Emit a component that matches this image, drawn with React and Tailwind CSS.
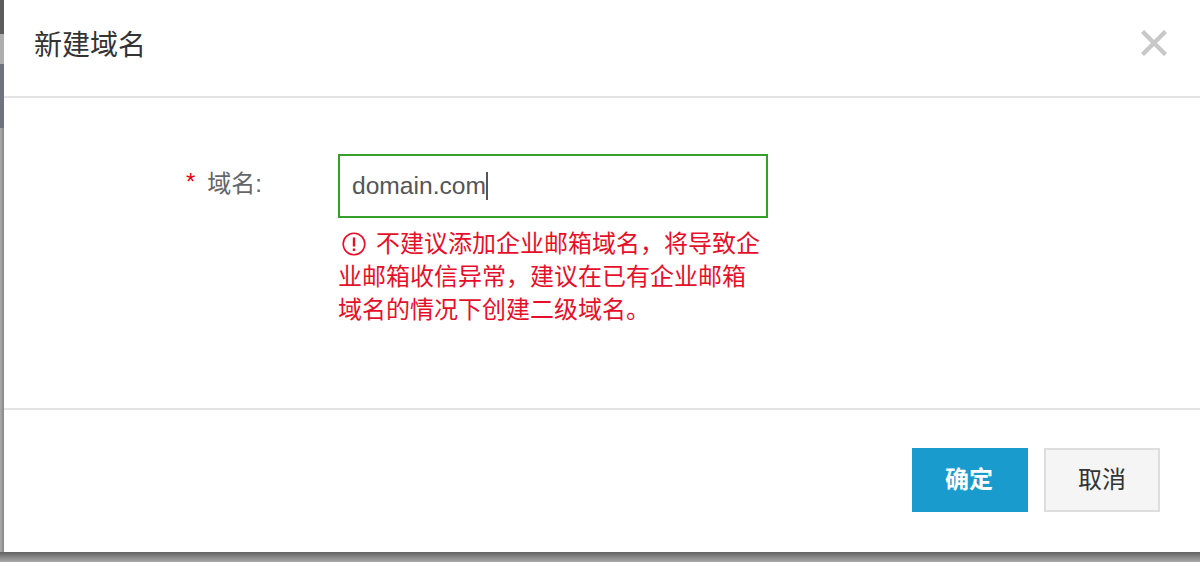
import React from "react";

const cjk = "font-['Liberation_Sans','Noto_Sans_CJK_SC',sans-serif]";

function App() {
  return (
    <div className={`flex h-[562px] w-[1200px] flex-col overflow-hidden bg-[#9a9a9a] ${cjk}`}>
      <div className="flex h-[552px]">
        {/* page behind the dialog */}
        <div className="flex w-[4px] flex-col bg-linear-to-r from-[#ababab] to-[#868686]">
          <div className="h-[34px] bg-[#5c5c5c]" />
          <div className="h-[30px] bg-[#adadad]" />
          <div className="h-[64px] bg-[#6f7380]" />
        </div>

        <div className="flex flex-1 flex-col bg-white">
          {/* Header */}
          <header className="flex h-[98px] items-start justify-between border-b-2 border-[#e3e3e3] pl-[30px] pr-[33px]">
            <h1 className="mt-[28px] text-[28px] leading-[36px] font-normal text-[#333]">新建域名</h1>
            <button className="mt-[30px] text-[#c8c8c8]" aria-label="关闭">
              <svg className="block" width="26" height="26" viewBox="0 0 26 26" fill="none" stroke="currentColor" strokeWidth="4.4">
                <path d="M1.5 1.5l23 23M24.5 1.5l-23 23" />
              </svg>
            </button>
          </header>

          {/* Form */}
          <main className="flex h-[310px] items-start pt-[56px]">
            <label className="flex w-[334px] justify-end pt-[15px] pr-[76px] text-[24px] leading-[30px] text-[#666]">
              <span className="mr-[12px] -translate-y-[2px] text-[#e60012]">*</span>
              域名:
            </label>
            <div className="w-[430px]">
              <div className="flex h-[64px] items-center border-2 border-[#37a02b] px-[12px] text-[24.6px] text-[#555]">
                domain.com
                <span className="h-[28px] w-[2px] bg-[#555]" />
              </div>
              <div className="mt-[9px] w-[430px] text-[24px] leading-[33px] text-[#e60f2a]">
                <svg className="mr-[10px] ml-[4px] inline-block -translate-y-[2px]" width="24" height="24" viewBox="0 0 24 24" fill="none" stroke="currentColor" strokeWidth="1.6">
                  <circle cx="12" cy="12" r="10.8" />
                  <path d="M12 5.5v9M12 16.5v2.4" strokeWidth="2.4" />
                </svg>
                不建议添加企业邮箱域名，将导致企业邮箱收信异常，建议在已有企业邮箱域名的情况下创建二级域名。
              </div>
            </div>
          </main>

          {/* Footer */}
          <footer className="flex flex-1 items-start justify-end gap-[16px] border-t-2 border-[#e3e3e3] pt-[38px] pr-[40px]">
            <button className="h-[64px] w-[116px] bg-[#1a9bcd] pr-[2px] text-[24px] font-bold text-white">确定</button>
            <button className="h-[64px] w-[116px] border-2 border-[#dedede] bg-[#f5f5f5] text-[24px] text-[#333]">取消</button>
          </footer>
        </div>
      </div>
      <div className="flex-1 bg-linear-to-b from-[#636363] to-[#aaaaaa]" />
    </div>
  );
}

export default App;
